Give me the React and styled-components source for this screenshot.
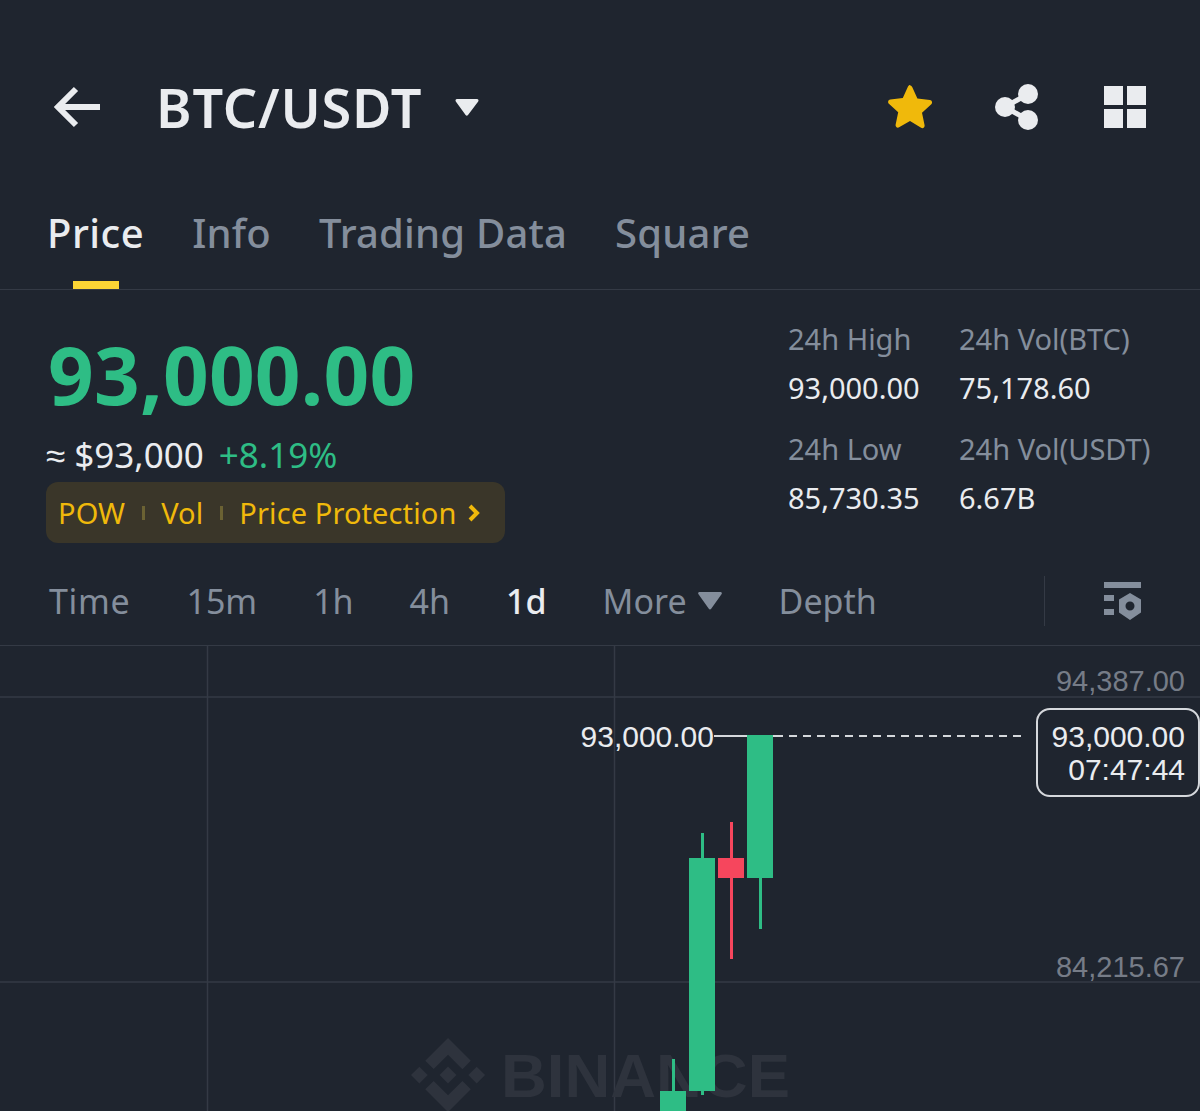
import React from "react";
import styled, { createGlobalStyle } from "styled-components";

const tabs = ["Price", "Info", "Trading Data", "Square"];
const ranges = ["Time", "15m", "1h", "4h", "1d"];

const candles = [
  { x: 660, top: 1091, bottom: 1111, wickTop: 1059, wickBottom: 1111, color: "#2ebd85" },
  { x: 689, top: 858, bottom: 1091, wickTop: 833, wickBottom: 1095, color: "#2ebd85" },
  { x: 718, top: 858, bottom: 878, wickTop: 822, wickBottom: 959, color: "#f6465d" },
  { x: 747, top: 735, bottom: 878, wickTop: 735, wickBottom: 929, color: "#2ebd85" },
];

export default function App() {
  return (
    <Page>
      <GlobalStyle />
      <Header>
        <HeaderLeft>
          <svg width="46" height="42" viewBox="0 0 46 42" fill="none" stroke="#eaecef" strokeWidth="6">
            <path d="M46 21H5M22 3 4 21l18 18" />
          </svg>
          <Title>BTC/USDT</Title>
          <svg width="26" height="20" viewBox="0 0 26 20">
            <path d="M3 2h20a1.500 1.500 0 0 1 1.200 2.400L14 18a1.500 1.500 0 0 1-2.400 0L1.800 4.400A1.500 1.500 0 0 1 3 2z" fill="#eaecef" />
          </svg>
        </HeaderLeft>
        <HeaderIcons>
          <svg width="48" height="48" viewBox="0 0 48 48">
            <path
              d="M24 2.500c1 0 1.800.6 2.200 1.500l5.200 11.600 12.500 1.400c2.100.3 2.900 2.800 1.400 4.200l-9.300 8.600 2.600 12.500c.4 2-1.700 3.600-3.500 2.500L24 38.100l-10.900 6.200c-1.800 1.100-3.900-.5-3.500-2.500l2.600-12.500-9.300-8.600c-1.500-1.400-.7-3.900 1.400-4.200l12.500-1.400 5.200-11.600c.4-.9 1.200-1.500 2.200-1.500z"
              fill="#f0b90b"
            />
          </svg>
          <svg width="46" height="48" viewBox="0 0 46 48" fill="#eaecef">
            <circle cx="11" cy="24" r="10" />
            <circle cx="34" cy="11" r="10" />
            <circle cx="34" cy="37" r="10" />
            <path d="M11 24 34 11M11 24l23 13" stroke="#eaecef" strokeWidth="5" />
          </svg>
          <svg width="42" height="42" viewBox="0 0 42 42" fill="#eaecef">
            <rect width="19" height="19" />
            <rect x="23" width="19" height="19" />
            <rect y="23" width="19" height="19" />
            <rect x="23" y="23" width="19" height="19" />
          </svg>
        </HeaderIcons>
      </Header>

      <Tabs>
        {tabs.map((t, i) => (
          <Tab key={t} $active={i === 0}>
            {t}
          </Tab>
        ))}
      </Tabs>

      <Summary>
        <PriceBlock>
          <BigPrice>93,000.00</BigPrice>
          <SubPrice>
            <Approx>≈ $93,000</Approx>
            <Change>+8.19%</Change>
          </SubPrice>
          <TagBar>
            <span>POW</span>
            <TagSep />
            <span>Vol</span>
            <TagSep />
            <span>Price Protection</span>
            <svg width="14" height="20" viewBox="0 0 14 20" fill="none" stroke="#f0b90b" strokeWidth="4">
              <path d="M3 3l7 7-7 7" />
            </svg>
          </TagBar>
        </PriceBlock>
        <Stats>
          <Stat>
            <StatLabel>24h High</StatLabel>
            <StatValue>93,000.00</StatValue>
          </Stat>
          <Stat>
            <StatLabel>24h Vol(BTC)</StatLabel>
            <StatValue>75,178.60</StatValue>
          </Stat>
          <Stat>
            <StatLabel>24h Low</StatLabel>
            <StatValue>85,730.35</StatValue>
          </Stat>
          <Stat>
            <StatLabel>24h Vol(USDT)</StatLabel>
            <StatValue>6.67B</StatValue>
          </Stat>
        </Stats>
      </Summary>

      <RangeBar>
        <RangeList>
          {ranges.map((r) => (
            <RangeItem key={r} $active={r === "1d"}>
              {r}
            </RangeItem>
          ))}
          <RangeItem>
            More
            <svg width="24" height="18" viewBox="0 0 24 18">
              <path d="M1.500 0h21c1.200 0 1.800 1.300 1 2.200L13.200 16.800c-.6.800-1.800.8-2.400 0L.5 2.200C-.3 1.300.3 0 1.500 0z" fill="#848e9c" />
            </svg>
          </RangeItem>
          <RangeItem>Depth</RangeItem>
        </RangeList>
        <SettingsCell>
          <svg width="38" height="40" viewBox="0 0 38 40" fill="#848e9c">
            <rect width="37" height="6" y="1" />
            <rect width="10" height="6" y="14" />
            <rect width="10" height="6" y="28" />
            <path
              fillRule="evenodd"
              d="M26 12l11 6.500v13L26 39l-11-7.500v-13zM26 20.500a4.500 4.500 0 1 0 0 9 4.500 4.500 0 0 0 0-9z"
            />
          </svg>
        </SettingsCell>
      </RangeBar>

      <Chart>
        <svg width="1200" height="465" viewBox="0 646 1200 465">
          <path d="M207.500 646v465M614.500 646v465M0 697h1200M0 982h1200" stroke="#343a45" strokeWidth="1.500" />
          <g fill="#2e333d">
            <g transform="translate(411 1038) scale(0.585)">
              <path d="M38.730 53.200 63.300 28.630l24.590 24.590 14.300-14.300L63.300 0 24.420 38.900z" />
              <path d="M0 63.310 14.300 49l14.310 14.310-14.310 14.300z" />
              <path d="M38.730 73.410 63.300 97.980l24.590-24.580 14.310 14.290-38.900 38.910-38.910-38.880z" />
              <path d="M98 63.310 112.300 49l14.310 14.300-14.310 14.320z" />
              <path d="M77.830 63.300 63.300 48.760 48.780 63.270l14.520 14.500z" />
            </g>
            <WatermarkText x="501" y="1097" textLength="289" lengthAdjust="spacingAndGlyphs">
              BINANCE
            </WatermarkText>
          </g>
          <path d="M714 736h61" stroke="#d5d8dc" strokeWidth="2" />
          <path d="M775 736h250" stroke="#d5d8dc" strokeWidth="2" strokeDasharray="8 6" />
          {candles.map((c) => (
            <g key={c.x} fill={c.color}>
              <rect x={c.x + 12} y={c.wickTop} width="3" height={c.wickBottom - c.wickTop} />
              <rect x={c.x} y={c.top} width="26" height={c.bottom - c.top} />
            </g>
          ))}
          <AxisText x="1185" y="691" textAnchor="end">94,387.00</AxisText>
          <AxisText x="1185" y="977" textAnchor="end">84,215.67</AxisText>
          <LastText x="714" y="747" textAnchor="end">93,000.00</LastText>
        </svg>
        <PriceFlag>
          <span>93,000.00</span>
          <span>07:47:44</span>
        </PriceFlag>
      </Chart>
    </Page>
  );
}

const GlobalStyle = createGlobalStyle`
  html, body {
    margin: 0;
    padding: 0;
    background: #1f252f;
  }
`;

const Page = styled.div`
  width: 1200px;
  height: 1111px;
  overflow: hidden;
  background: #1f252f;
  color: #eaecef;
  font-family: "Noto Sans", "Liberation Sans", sans-serif;
  svg {
    display: block;
    flex-shrink: 0;
  }
`;

const Header = styled.div`
  height: 178px;
  padding: 35px 54px 0 54px;
  box-sizing: border-box;
  display: flex;
  justify-content: space-between;
  align-items: center;
`;

const HeaderLeft = styled.div`
  display: flex;
  align-items: center;
`;

const Title = styled.div`
  font-size: 54px;
  font-weight: 600;
  line-height: 60px;
  margin: 0 32px 0 56px;
  letter-spacing: 0.8px;
`;

const HeaderIcons = styled.div`
  display: flex;
  align-items: center;
  gap: 60px;
  svg:last-child {
    margin-left: 4px;
  }
`;

const Tabs = styled.div`
  height: 112px;
  padding-left: 47px;
  box-sizing: border-box;
  display: flex;
  gap: 48px;
  border-bottom: 1px solid #343a45;
`;

const Tab = styled.div`
  position: relative;
  font-size: 40px;
  line-height: 110px;
  font-weight: 500;
  letter-spacing: ${(p) => (p.$active ? "0.5px" : "0.2px")};
  color: ${(p) => (p.$active ? "#eaecef" : "#848e9c")};
  &::after {
    content: "";
    display: ${(p) => (p.$active ? "block" : "none")};
    position: absolute;
    left: 50%;
    bottom: 0;
    width: 46px;
    height: 8px;
    margin-left: -23px;
    background: #fcd535;
  }
`;

const Summary = styled.div`
  height: 254px;
  box-sizing: border-box;
  padding: 36px 46px 0 46px;
  display: flex;
  justify-content: space-between;
`;

const PriceBlock = styled.div`
  display: flex;
  flex-direction: column;
  align-items: flex-start;
`;

const BigPrice = styled.div`
  font-size: 80px;
  line-height: 96px;
  font-weight: 700;
  letter-spacing: 0.2px;
  color: #2ebd85;
  margin-left: 2px;
`;

const SubPrice = styled.div`
  display: flex;
  gap: 15px;
  font-size: 35px;
  line-height: 44px;
  margin-top: 11px;
`;

const Approx = styled.span`
  color: #eaecef;
`;

const Change = styled.span`
  color: #2ebd85;
`;

const TagBar = styled.div`
  width: 459px;
  height: 61px;
  margin-top: 5px;
  box-sizing: border-box;
  padding: 0 12px;
  display: flex;
  align-items: center;
  background: #3a3629;
  border-radius: 12px;
  color: #f0b90b;
  font-size: 29px;
  letter-spacing: 0.1px;
  white-space: nowrap;
  svg {
    margin-left: 11px;
  }
`;

const TagSep = styled.i`
  width: 3px;
  height: 14px;
  margin: 0 16px 0 17px;
  background: #6b6233;
`;

const Stats = styled.div`
  display: grid;
  grid-template-columns: 171px 195px;
  grid-auto-rows: 110px;
  align-content: start;
`;

const Stat = styled.div`
  display: flex;
  flex-direction: column;
  gap: 7px;
  font-size: 29px;
  line-height: 42px;
  margin-top: -8px;
  white-space: nowrap;
`;

const StatLabel = styled.span`
  color: #848e9c;
`;

const StatValue = styled.span`
  color: #eaecef;
`;

const RangeBar = styled.div`
  height: 102px;
  box-sizing: border-box;
  padding: 12px 58px 0 49px;
  display: flex;
  justify-content: space-between;
  align-items: center;
  border-bottom: 1px solid #343a45;
`;

const RangeList = styled.div`
  display: flex;
  align-items: center;
  gap: 56px;
`;

const RangeItem = styled.div`
  display: flex;
  align-items: center;
  gap: 11px;
  font-size: 34px;
  line-height: 48px;
  font-weight: ${(p) => (p.$active ? 500 : 400)};
  color: ${(p) => (p.$active ? "#eaecef" : "#848e9c")};
  &:first-child {
    letter-spacing: 0.7px;
  }
  svg {
    margin-right: 1px;
  }
`;

const SettingsCell = styled.div`
  width: 97px;
  height: 50px;
  display: flex;
  justify-content: flex-end;
  align-items: center;
  border-left: 1px solid #343a45;
`;

const Chart = styled.div`
  position: relative;
  height: 465px;
  font-family: "Liberation Sans", Arial, sans-serif;
`;

const WatermarkText = styled.text`
  font-family: "Liberation Sans", Arial, sans-serif;
  font-size: 61px;
  font-weight: 700;
`;

const AxisText = styled.text`
  font-family: "Liberation Sans", Arial, sans-serif;
  font-size: 29px;
  fill: #767c87;
`;

const LastText = styled.text`
  font-family: "Liberation Sans", Arial, sans-serif;
  font-size: 30px;
  fill: #eaecef;
`;

const PriceFlag = styled.div`
  position: absolute;
  top: 62px;
  right: 0;
  width: 164px;
  height: 89px;
  box-sizing: border-box;
  padding: 0 13px 0 0;
  border: 2px solid #d5d8dc;
  border-radius: 14px;
  background: #1f252f;
  display: flex;
  flex-direction: column;
  justify-content: center;
  align-items: flex-end;
  font-size: 30px;
  line-height: 33px;
  color: #eaecef;
`;
